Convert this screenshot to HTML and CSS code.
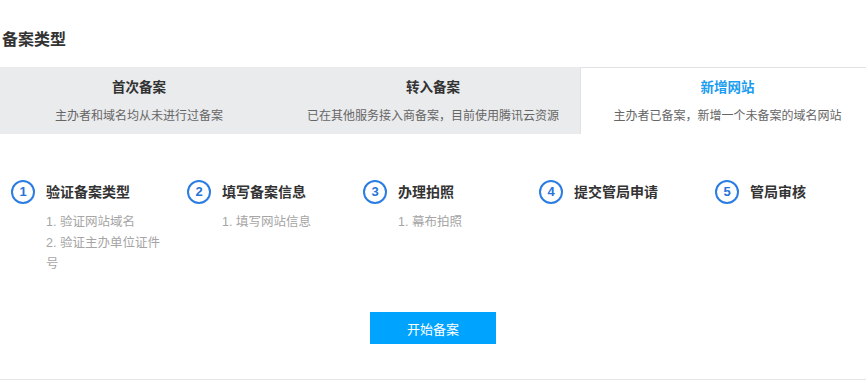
FILE: index.html
```html
<!DOCTYPE html>
<html lang="zh">
<head>
<meta charset="utf-8">
<link rel="stylesheet" href="styles.css">
</head>
<body>
<div class="page">
  <h2 class="title">备案类型</h2>
  <div class="tabs">
    <div class="tab">
      <div class="tab-title">首次备案</div>
      <div class="tab-desc">主办者和域名均从未进行过备案</div>
    </div>
    <div class="tab">
      <div class="tab-title">转入备案</div>
      <div class="tab-desc">已在其他服务接入商备案，目前使用腾讯云资源</div>
    </div>
    <div class="tab active">
      <div class="tab-title">新增网站</div>
      <div class="tab-desc">主办者已备案，新增一个未备案的域名网站</div>
    </div>
  </div>
  <div class="steps">
    <div class="step">
      <div class="num">1</div>
      <div class="step-body">
        <div class="step-title">验证备案类型</div>
        <div class="sub">1. 验证网站域名</div>
        <div class="sub">2. 验证主办单位证件号</div>
      </div>
    </div>
    <div class="step">
      <div class="num">2</div>
      <div class="step-body">
        <div class="step-title">填写备案信息</div>
        <div class="sub">1. 填写网站信息</div>
      </div>
    </div>
    <div class="step">
      <div class="num">3</div>
      <div class="step-body">
        <div class="step-title">办理拍照</div>
        <div class="sub">1. 幕布拍照</div>
      </div>
    </div>
    <div class="step">
      <div class="num">4</div>
      <div class="step-body">
        <div class="step-title">提交管局申请</div>
      </div>
    </div>
    <div class="step">
      <div class="num">5</div>
      <div class="step-body">
        <div class="step-title">管局审核</div>
      </div>
    </div>
  </div>
  <div class="actions">
    <button class="btn">开始备案</button>
  </div>
</div>
</body>
</html>
```
FILE: styles.css
```css
html, body {
  margin: 0;
  padding: 0;
  overflow: hidden;
  background: #fff;
}
body {
  font-family: "Liberation Sans", "Noto Sans CJK SC", sans-serif;
  color: #333;
}
.page {
  width: 866px;
  height: 382px;
  overflow: hidden;
}
.title {
  margin: 0 0 15px 0;
  padding: 28px 0 0 2px;
  font-size: 16px;
  line-height: 24px;
  font-weight: bold;
  color: #333;
}
.tabs {
  display: grid;
  grid-template-columns: repeat(3, 294px);
  margin-left: -8px;
  width: 882px;
  background: #eaebed;
}
.tab {
  box-sizing: border-box;
  height: 67px;
  padding-top: 10px;
  text-align: center;
  border-top: 1px solid #eaebed;
}
.tab.active {
  background: #fff;
  border-top: 1px solid #e1e2e4;
  border-left: 1px solid #e1e2e4;
}
.tab-title {
  font-size: 13.5px;
  line-height: 20px;
  font-weight: bold;
  color: #333;
}
.tab.active .tab-title {
  color: #1a9cf0;
}
.tab-desc {
  margin-top: 8px;
  font-size: 12px;
  line-height: 20px;
  color: #666;
}
.steps {
  display: flex;
  padding-left: 11px;
  margin-top: 46px;
  height: 94px;
}
.step {
  display: flex;
  width: 176px;
  flex: none;
  gap: 11px;
}
.num {
  box-sizing: border-box;
  width: 24px;
  height: 24px;
  border: 2px solid #2b7ee0;
  border-radius: 50%;
  color: #2573d9;
  font-size: 13px;
  font-weight: bold;
  line-height: 20px;
  text-align: center;
  flex: none;
}
.step-body {
  width: 120px;
}
.step-title {
  font-size: 14px;
  line-height: 24px;
  font-weight: bold;
  color: #333;
  white-space: nowrap;
  margin-bottom: 8px;
}
.sub {
  font-size: 12.5px;
  line-height: 21px;
  color: #a5a5a5;
}
.actions {
  display: flex;
  justify-content: center;
  margin-left: -8px;
  width: 882px;
  padding-top: 38px;
  padding-bottom: 35px;
  border-bottom: 1px solid #e5e5e5;
}
.btn {
  width: 126px;
  height: 32px;
  border: none;
  background: #00a4ff;
  color: #fff;
  font-family: "Liberation Sans", "Noto Sans CJK SC", sans-serif;
  font-size: 13px;
  padding: 0;
  cursor: pointer;
}
```
